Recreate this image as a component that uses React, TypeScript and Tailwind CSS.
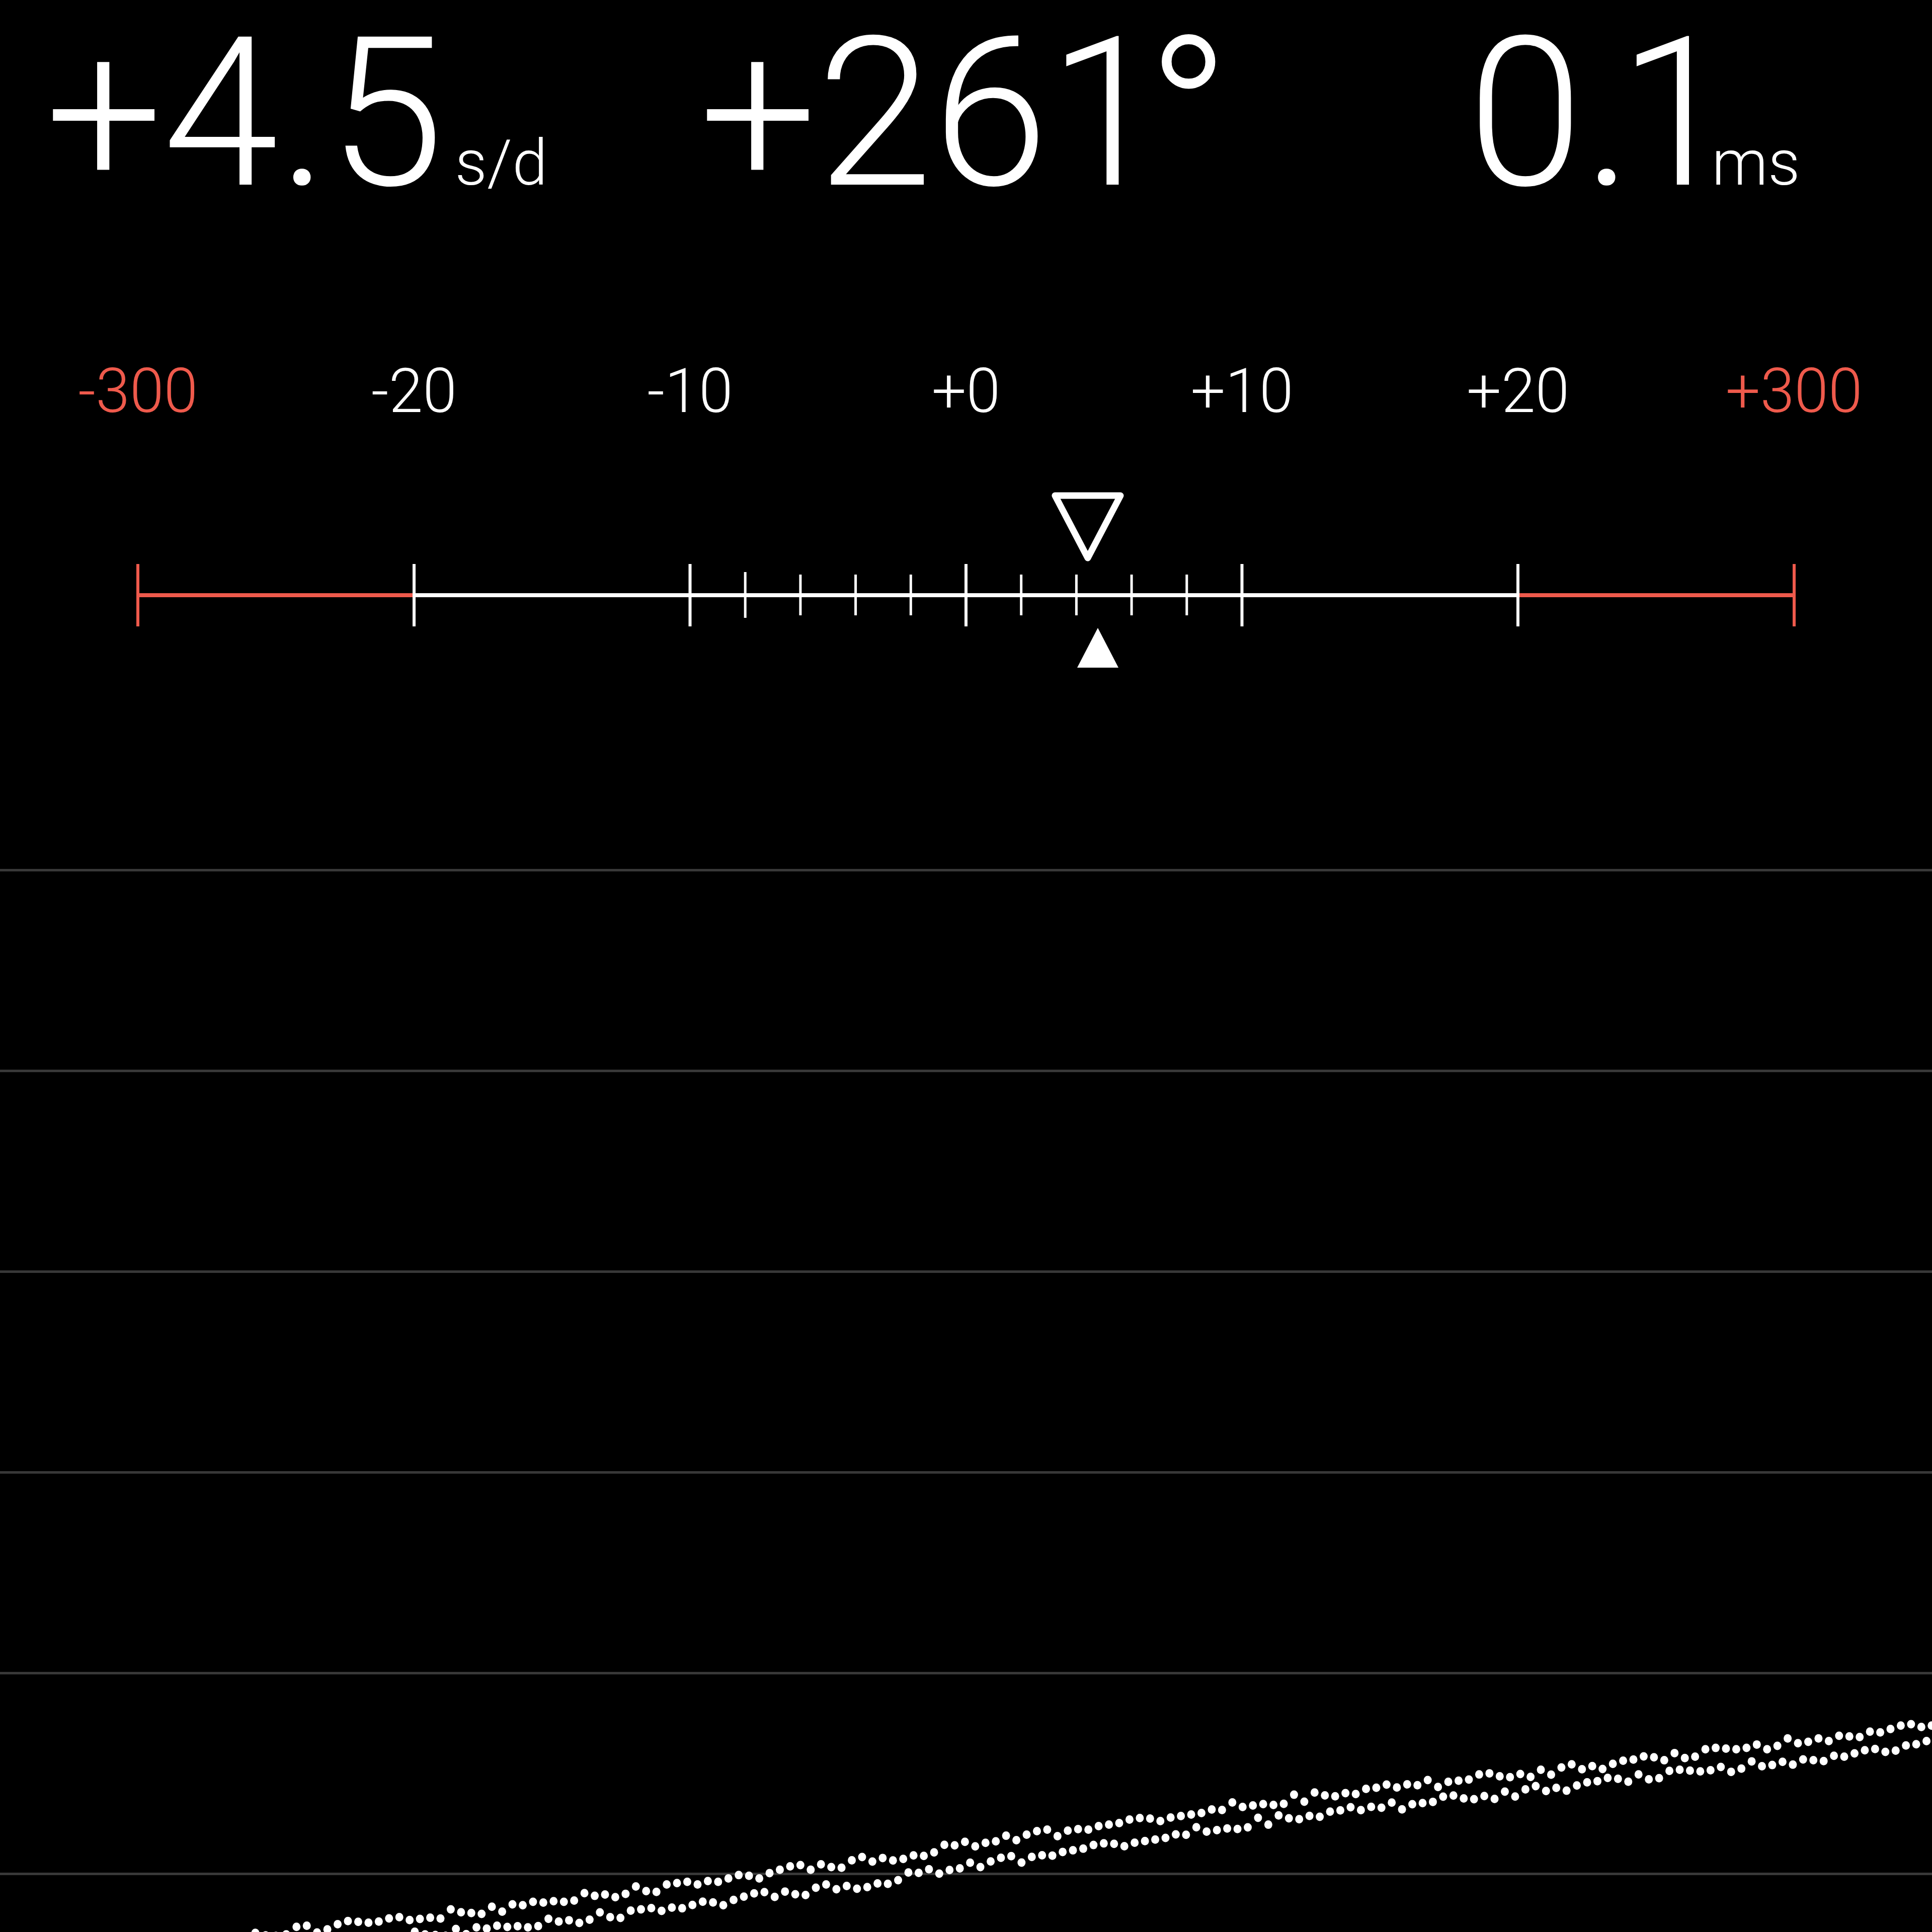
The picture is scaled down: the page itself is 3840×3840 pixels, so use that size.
import React from "react";

const RED = "#ef5a4c";
const MAJOR = [274, 823, 1371.5, 1920, 2468.5, 3017, 3566];
const MINOR: number[] = [];
for (let k = 1; k <= 4; k++) MINOR.push(1371.5 + 109.7 * k);
for (let k = 1; k <= 4; k++) MINOR.push(1920 + 109.7 * k);

const LABELS = [
  { t: "-300", red: true },
  { t: "-20", red: false },
  { t: "-10", red: false },
  { t: "+0", red: false },
  { t: "+10", red: false },
  { t: "+20", red: false },
  { t: "+300", red: true },
];

const UPPER = [
  [0, 3925],
  [587, 3838],
  [1037, 3787],
  [1713, 3699],
  [2200, 3627],
  [2500, 3583],
  [3350, 3490],
  [3822, 3428],
  [4000, 3405],
];
const LOWER = [
  [0, 3960],
  [880, 3840],
  [1047, 3827],
  [1703, 3746],
  [2193, 3668],
  [2500, 3621],
  [3343, 3525],
  [3833, 3468],
  [4000, 3448],
];

function interp(pts: number[][], x: number) {
  if (x <= pts[0][0]) return pts[0][1];
  for (let i = 0; i < pts.length - 1; i++) {
    const [x0, y0] = pts[i];
    const [x1, y1] = pts[i + 1];
    if (x >= x0 && x <= x1) return y0 + ((y1 - y0) * (x - x0)) / (x1 - x0);
  }
  return pts[pts.length - 1][1];
}

function rnd(i: number) {
  const s = Math.sin(i * 127.1 + 311.7) * 43758.5453;
  return s - Math.floor(s);
}

const DOTS: { x: number; y: number }[] = [];
for (let k = -62; k <= 106; k++) {
  const xu = 1713.5 + 20.44 * k;
  const xl = 1703.3 + 20.44 * k;
  const ju = Math.round((rnd(k * 2 + 1) - 0.5) * 4) * 4;
  const jl = Math.round((rnd(k * 2 + 7) - 0.5) * 4) * 4;
  DOTS.push({ x: xu, y: interp(UPPER, xu) + ju });
  DOTS.push({ x: xl, y: interp(LOWER, xl) + jl });
}

const BIG = "text-[414px] leading-none font-light text-white";
const UNIT = "text-[126px] leading-none font-light text-white";

export default function App() {
  return (
    <div className="w-[3840px] h-[3840px] bg-black overflow-hidden flex flex-col font-[Roboto,sans-serif]">
      {/* Header readings */}
      <div className="h-[717px] shrink-0 flex items-start pt-[19px] pl-[90px]">
        <div className="w-[1300px] shrink-0 flex items-baseline">
          <span className={BIG}>+4.5</span>
          <span className={`${UNIT} ml-[22px]`}>s/d</span>
        </div>
        <div className="w-[1527px] shrink-0 flex items-baseline">
          <span className={BIG}>
            +26<span className="tracking-[-45px]">1</span>
            <span className="inline-block translate-x-[16px] translate-y-[12px] scale-[1.08]">°</span>
          </span>
        </div>
        <div className="shrink-0 flex items-baseline">
          <span className={BIG}>
            0<span className="tracking-[-29px]">.</span>
            <span className="tracking-[-44px]">1</span>
          </span>
          <span className={UNIT}>ms</span>
        </div>
      </div>

      {/* Scale labels */}
      <div className="h-[122px] shrink-0 grid grid-cols-7">
        {LABELS.map((l) => (
          <div
            key={l.t}
            className={`text-center text-[122px] leading-none font-light ${
              l.red ? "text-[#ef5a4c]" : "text-white"
            }`}
          >
            {l.t}
          </div>
        ))}
      </div>

      {/* Scale */}
      <div className="h-[500px] shrink-0">
        <svg width="3840" height="500" viewBox="0 839 3840 500" className="block">
          <line x1={274} y1={1183} x2={823} y2={1183} stroke={RED} strokeWidth={8} />
          <line x1={823} y1={1183} x2={3017} y2={1183} stroke="#fff" strokeWidth={8} />
          <line x1={3017} y1={1183} x2={3566} y2={1183} stroke={RED} strokeWidth={8} />
          {MAJOR.map((x, i) => (
            <line
              key={x}
              x1={x}
              y1={1121}
              x2={x}
              y2={1245}
              stroke={i === 0 || i === MAJOR.length - 1 ? RED : "#fff"}
              strokeWidth={6}
            />
          ))}
          {MINOR.map((x, i) => (
            <line
              key={x}
              x1={x}
              y1={i === 0 ? 1137 : 1142}
              x2={x}
              y2={i === 0 ? 1228 : 1223}
              stroke="#fff"
              strokeWidth={5}
            />
          ))}
          <polygon
            points="2097,985 2227,985 2162,1109"
            fill="none"
            stroke="#fff"
            strokeWidth={13}
            strokeLinejoin="round"
          />
          <polygon points="2182,1248 2141,1327 2223,1327" fill="#fff" />
        </svg>
      </div>

      {/* Chart */}
      <div className="relative flex-1 flex flex-col gap-[394px] pt-[388px]">
        {[0, 1, 2, 3, 4, 5].map((i) => (
          <div key={i} className="h-[5px] w-full bg-[#383838] shrink-0" />
        ))}
        <svg
          className="absolute inset-0"
          width="3840"
          height="2501"
          viewBox="0 1339 3840 2501"
        >
          {DOTS.map((d, i) => (
            <ellipse key={i} cx={d.x} cy={d.y} rx={8} ry={8.5} fill="#fff" />
          ))}
        </svg>
      </div>
    </div>
  );
}
